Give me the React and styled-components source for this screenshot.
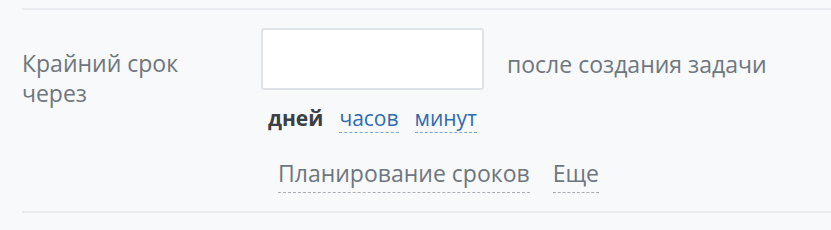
import React from "react";
import styled, { createGlobalStyle } from "styled-components";

const Global = createGlobalStyle`
  html, body { margin: 0; padding: 0; background: #f8f9fa; }
  body { font-family: "Open Sans", "Noto Sans", sans-serif; }
`;

const Section = styled.div`
  margin: 8px 0 0 22px;
  border-top: 2px solid #e9ebee;
  border-bottom: 2px solid #e9ebee;
  padding: 18px 0 18px 0;
  width: 809px;
  box-sizing: border-box;
`;

const Row = styled.div`
  display: flex;
  align-items: flex-start;
`;

const Label = styled.div`
  width: 239px;
  flex: none;
  margin-top: 20px;
  font-size: 23px;
  line-height: 30px;
  color: #6e7680;
`;

const Field = styled.div`
  display: flex;
  flex-direction: column;
`;

const InputLine = styled.div`
  display: flex;
  align-items: flex-start;
  gap: 23px;
`;

const Input = styled.input`
  width: 223px;
  height: 62px;
  box-sizing: border-box;
  border: 2px solid #dfe3e7;
  border-radius: 3px;
  background: #fff;
  outline: none;
  font-size: 20px;
  font-family: inherit;
`;

const After = styled.span`
  font-size: 23px;
  line-height: 30px;
  color: #6e7680;
  margin-top: 21px;
  white-space: nowrap;
`;

const Units = styled.div`
  display: flex;
  align-items: flex-start;
  gap: 16px;
  margin: 15px 0 0 7px;
  font-size: 21px;
`;

const Unit = styled.span`
  color: ${(p) => (p.$active ? "#3b4047" : "#2f6ab0")};
  font-weight: ${(p) => (p.$active ? 700 : 400)};
  border-bottom: 1px dashed ${(p) => (p.$active ? "transparent" : "#7fa6d6")};
  line-height: 27px;
`;

const Links = styled.div`
  display: flex;
  align-items: flex-start;
  gap: 23px;
  margin: 25px 0 0 17px;
  font-size: 23px;
`;

const Link = styled.span`
  color: #6e7680;
  border-bottom: 1px dashed #a8adb4;
  line-height: 30px;
  padding-bottom: 4px;
`;

export default function App() {
  return (
    <>
      <Global />
      <Section>
        <Row>
          <Label>
            Крайний срок
            <br />
            через
          </Label>
          <Field>
            <InputLine>
              <Input type="text" />
              <After>после создания задачи</After>
            </InputLine>
            <Units>
              <Unit $active>дней</Unit>
              <Unit>часов</Unit>
              <Unit>минут</Unit>
            </Units>
            <Links>
              <Link>Планирование сроков</Link>
              <Link>Еще</Link>
            </Links>
          </Field>
        </Row>
      </Section>
    </>
  );
}
